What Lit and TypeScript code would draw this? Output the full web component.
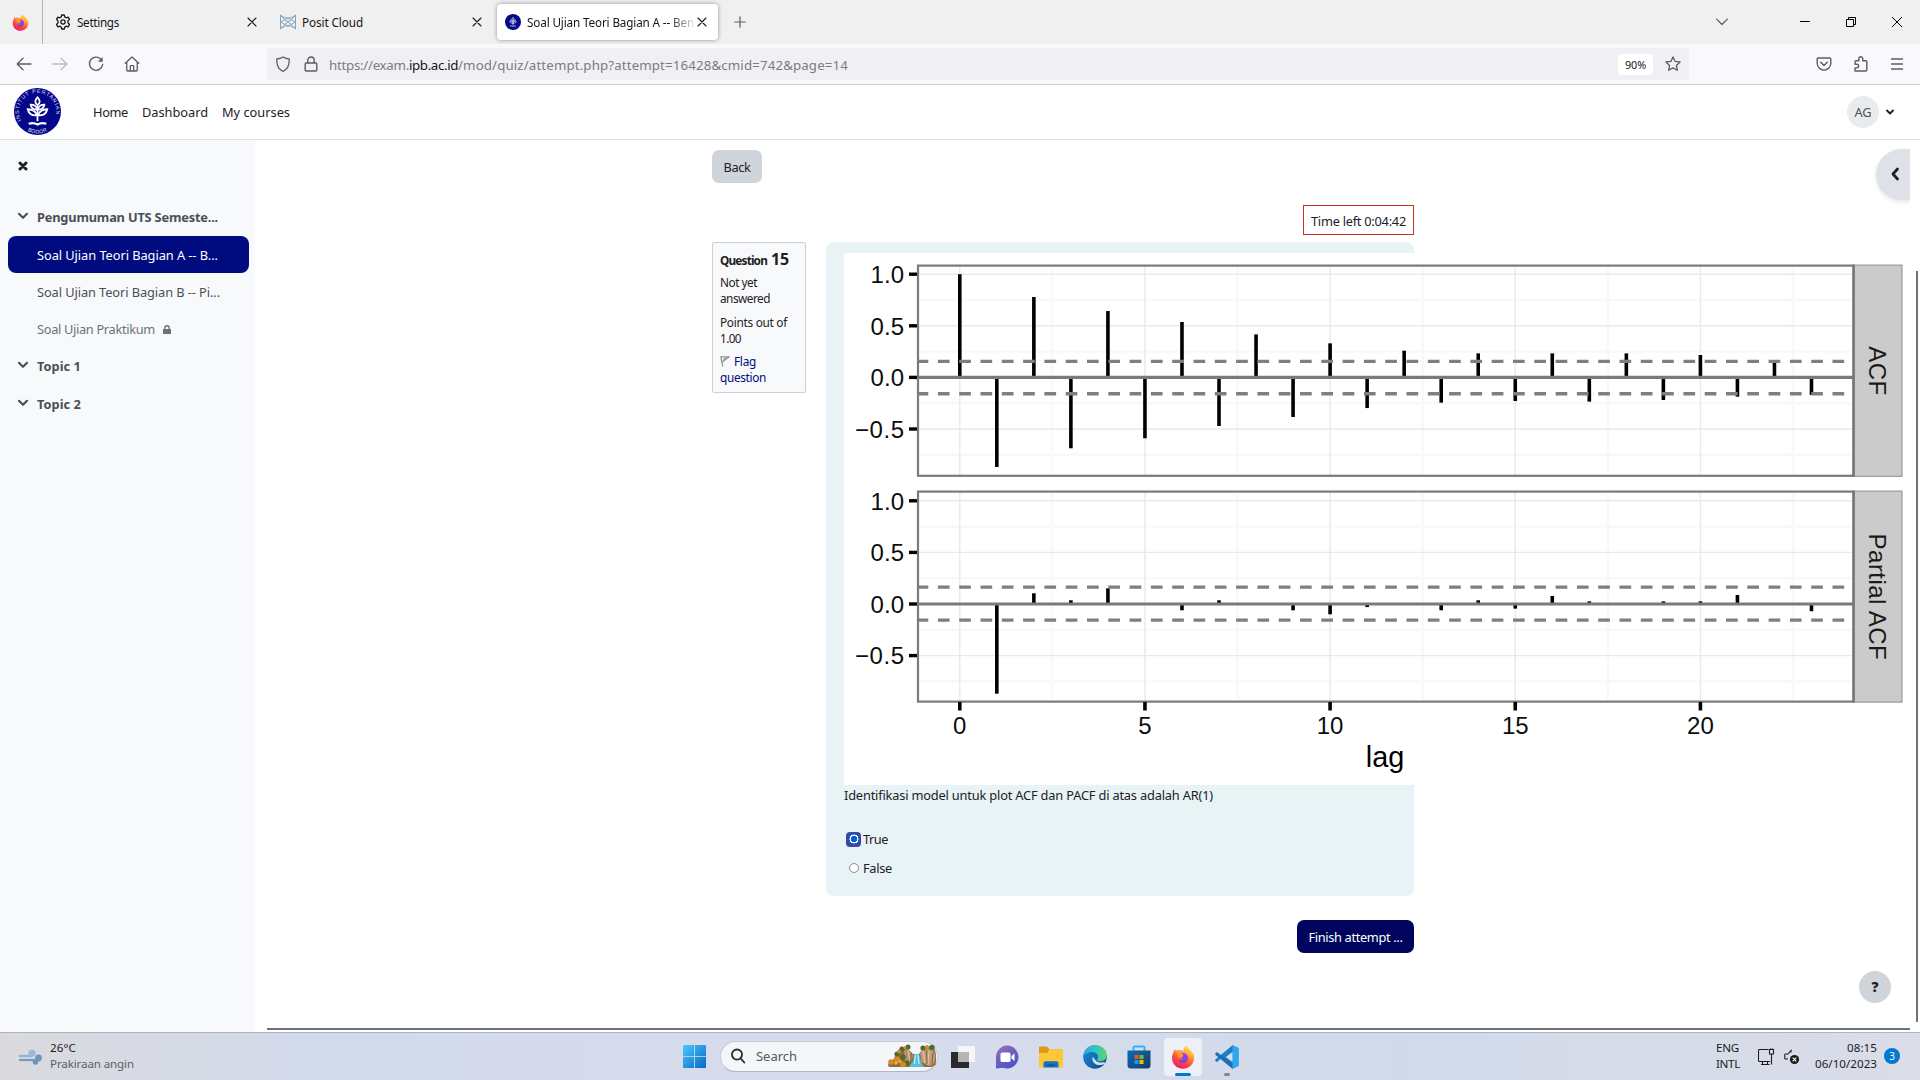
import { LitElement, html, svg, css } from "lit";
import { customElement, property } from "lit/decorators.js";

/** Text run whose tracking is adjusted so that it spans a known width. */
@customElement("fit-text")
class FitText extends LitElement {
  @property({ type: Number }) w = 0;
  @property() text = "";
  static styles = css`
    :host { display: inline-block; white-space: nowrap; }
    .run { display: inline-block; white-space: pre; }
  `;
  render() {
    return html`<span class="run">${this.text}</span>`;
  }
  updated() {
    const run = this.renderRoot.querySelector(".run") as HTMLElement;
    run.style.letterSpacing = "0px";
    const natural = run.getBoundingClientRect().width;
    if (this.w && natural) run.style.letterSpacing = `${(this.w - natural) / this.text.length}px`;
  }
}

const t = (text: string, w: number, cls = "") => html`<fit-text class=${cls} .text=${text} .w=${w}></fit-text>`;

const firefox = (s: number) => html`<svg width=${s} height=${s} viewBox="0 0 24 24">
  <defs>
    <linearGradient id="ff1" x1=".8" y1="0" x2=".3" y2="1"><stop offset="0" stop-color="#fff44f"/><stop offset=".35" stop-color="#ffa436"/><stop offset=".65" stop-color="#ff4f3a"/><stop offset="1" stop-color="#f5156c"/></linearGradient>
    <linearGradient id="ff2" x1=".7" y1="0" x2=".4" y2="1"><stop offset="0" stop-color="#b833e1"/><stop offset="1" stop-color="#5b4ee8"/></linearGradient>
  </defs>
  <path fill="url(#ff1)" d="M15 .3c1.300 2.500 3.600 3.800 5 5.400.7.700 1 1.600 1.200 2.300l.6-.6c1 2 1.500 4 1.300 6.100C22.600 19.500 18 23.700 12 23.700 5.800 23.700 1 19 1 13c0-2.600.7-4.600 1.700-6.200L3 4.300l2 1.500c1.300-.8 2.400-.7 3.400-.4 1.600-.2 3 .1 3.900.9C12.300 4 13.400 2 15 .3z"/>
  <path fill="url(#ff2)" d="M8.500 8.500c2.500-1.500 6.500-.5 8 2.200 1.200 2.600.2 5.800-2.700 7-2.800 1-6-.3-6.600-3 1.200.9 2.800.8 3.800.1l1.200-.9c-.1-.7-1.200-.6-1.500-1 .2-1 1.200-1.200 1.700-1.700-1.400-1.300-2.600-1.200-3.900-2.700z"/>
  <path fill="#ff9a2e" d="M5 5.800c1.300-.8 3-.7 4 0 1.600 0 2.700.5 3.300 1-.9.100-1.500.5-1.900 1.100 1 .9 2.200 1.500 2 2.200-.4.900-1.700.8-1.900 1.900-.9-.1-2.200-.3-3.200.8C6 11 6.300 9.300 7 8.300 6 7.800 5.300 6.800 5 5.800z"/>
</svg>`;

const crest = (s: number, detail: boolean) => html`<svg width=${s} height=${s} viewBox="0 0 48 48">
  <defs>
    <path id="arcTop" d="M8.200 34.500A19 19 0 1 1 39.800 34.500"/>
    <path id="arcBot" d="M8.500 40A22 22 0 0 0 39.500 40"/>
  </defs>
  <circle cx="24" cy="24" r="24" fill="#06068a"/>
  ${detail
    ? svg`<g fill="#dfe0f5" font-family="Liberation Sans, sans-serif" font-size="5.400">
        <text textLength="72"><textPath href="#arcTop" startOffset="1.500">INSTITUT PERTANIAN</textPath></text>
        <text textLength="21"><textPath href="#arcBot" startOffset="6.500">BOGOR</textPath></text></g>`
    : ""}
  <g fill="none" stroke="#fff" stroke-width="1.800">
    <path d="M24 17v17M24 9.500c-3 3.200-3 5.400 0 8 3-2.600 3-4.800 0-8z"/>
    <path d="M23.500 22c-3.700.2-6-1.500-6.500-5 3.700 0 6 1.700 6.500 5zM24.500 22c3.700.2 6-1.500 6.500-5-3.700 0-6 1.700-6.500 5z"/>
    <path d="M23.500 28c-5 .3-8.500-1.900-9.500-6.300 5 .2 8.500 2.300 9.500 6.300zM24.500 28c5 .3 8.500-1.900 9.500-6.300-5 .2-8.500 2.300-9.500 6.300z"/>
    <path d="M15 36.500c3.500-1.200 6-1 9 .8 3-1.800 5.500-2 9-.8" stroke-width="2.200"/>
  </g>
</svg>`;

const stroke = (w: number, h: number, d: string, c = "#5b5b66", sw = 1.3, cls = "") =>
  html`<svg class=${cls} width=${w} height=${h} viewBox="0 0 ${w} ${h}" fill="none" stroke=${c} stroke-width=${sw} stroke-linecap="round" stroke-linejoin="round"><path d=${d}/></svg>`;

const xIcon = (c = "#1b1b1f") => stroke(10, 10, "M1 1l8 8M9 1l-8 8", c, 1.1);
const chevron = (c: string) => stroke(12, 8, "M2 1.800l4 4 4-4", c, 2.200);

const ACF = [1, -0.868, 0.779, -0.687, 0.643, -0.59, 0.537, -0.471, 0.417, -0.384, 0.33, -0.297, 0.259, -0.245, 0.233, -0.229, 0.233, -0.235, 0.233, -0.219, 0.217, -0.187, 0.146, -0.17];
const PACF = [0, -0.869, 0.104, 0.036, 0.152, 0, -0.061, 0.036, 0, -0.061, -0.1, -0.03, 0, -0.061, 0.036, -0.045, 0.078, 0.026, 0, 0.026, 0.026, 0.087, 0, -0.07];

@customElement("acf-plot")
class AcfPlot extends LitElement {
  static styles = css`
    :host { display: block; width: 1066px; height: 532px; background: #fff; }
    svg { display: block; }
    text { font-family: "Liberation Sans", Arial, sans-serif; font-size: 24px; fill: #0d0d0d; }
    .title { font-size: 28.800px; fill: #000; }
    .strip { fill: #1a1a1a; }
  `;
  private x(lag: number) { return 115.8 + lag * 37.03; }

  private panel(values: number[], zero: number, top: number, bottom: number, upper: number, lower: number, label: string, span: number) {
    const y = (v: number) => zero - v * 103.2;
    return svg`
      ${[-0.75, -0.25, 0.25, 0.75].map((v) => svg`<path d="M76 ${y(v)}H1008" stroke="#f8f8f8" stroke-width="2.500"/>`)}
      ${[2.5, 7.5, 12.5, 17.5, 22.5].map((v) => svg`<path d="M${this.x(v)} ${top + 2}V${bottom - 2}" stroke="#f8f8f8" stroke-width="2.500"/>`)}
      ${[-0.5, 0.5, 1].map((v) => svg`<path d="M75 ${y(v)}H1009" stroke="#e9e9e9" stroke-width="1.400"/>`)}
      ${[0, 5, 10, 15, 20].map((v) => svg`<path d="M${this.x(v)} ${top}V${bottom}" stroke="#e9e9e9" stroke-width="1.400"/>`)}
      ${values.map((v, i) => (v ? svg`<path d="M${this.x(i)} ${zero}V${y(v)}" stroke="#000" stroke-width="3.600"/>` : ""))}
      <path d="M74 ${zero}H1009" stroke="#7a7a7a" stroke-width="3.200"/>
      ${[upper, lower].map((v) => svg`<path d="M74 ${v}H1004" stroke="#7f7f7f" stroke-width="3.400" stroke-dasharray="11.700 9.600" stroke-dashoffset="1.400"/>`)}
      <rect x="74" y=${top} width="935.500" height=${bottom - top} fill="none" stroke="#7a7a7a" stroke-width="2.200"/>
      <rect x="1010.500" y=${top - 0.5} width="47.500" height=${bottom - top + 1} fill="#cbcbcb" stroke="#8a8a8a" stroke-width="1"/>
      <path d="M1009.500 ${top - 1}V${bottom + 1}" stroke="#777" stroke-width="2.200"/>
      <text class="strip" transform="translate(1024.800 ${(top + bottom) / 2}) rotate(90)" text-anchor="middle" textLength=${span}>${label}</text>
      ${[1, 0.5, 0, -0.5].map((v) => svg`
        <path d="M65 ${y(v)}H73" stroke="#000" stroke-width="3.400"/>
        <text x="60" y=${y(v) + 8.8} text-anchor="end" textLength=${v < 0 ? 49 : 33.4}>${v.toFixed(1).replace("-", "\u2212")}</text>`)}
    `;
  }

  render() {
    return html`<svg width="1066" height="532" viewBox="0 0 1066 532">
      ${this.panel(ACF, 124.4, 12.6, 222.8, 108.4, 140.7, "ACF", 49)}
      ${this.panel(PACF, 351, 238.6, 448.6, 334.1, 367.1, "Partial ACF", 126)}
      ${[0, 5, 10, 15, 20].map((v) => svg`
        <path d="M${this.x(v)} 449V457.500" stroke="#000" stroke-width="3.600"/>
        <text x=${this.x(v)} y="480.700" text-anchor="middle">${v}</text>`)}
      <text class="title" x="541" y="513.700" text-anchor="middle">lag</text>
    </svg>`;
  }
}

@customElement("app-root")
class AppRoot extends LitElement {
  static styles = css`
    :host { display: flex; flex-direction: column; width: 1920px; height: 1080px; overflow: hidden; position: relative; background: #fff;
      font-family: "Noto Sans", "Open Sans", sans-serif; font-size: 12.800px; line-height: 16px; color: #1d2125; }
    * { box-sizing: border-box; }
    svg { display: block; flex: none; }
    fit-text { flex: none; }

    .tabs { height: 44px; flex: none; display: flex; align-items: center; background: #f0f0f0; font-size: 11.700px; color: #15141a; }
    .pin { width: 43px; height: 44px; border-right: 1px solid #b5b5b5; padding: 14px 0 0 12px; margin-right: 1px; }
    .tab { width: 225px; height: 36px; padding: 0 12px 0 11px; display: flex; align-items: center; gap: 6px; }
    .tab .label { flex: 1; overflow: hidden; display: flex; }
    .tab.active { position: relative; z-index: 0; }
    .tab.active::before { content: ""; position: absolute; z-index: -1; inset: 0 1px 0 3px; background: #fff; border-radius: 4px; box-shadow: 0 0 4px rgba(0,0,0,.4); }
    .tab.active .label { margin-right: -3px; -webkit-mask-image: linear-gradient(90deg, #000 142px, transparent 170px); mask-image: linear-gradient(90deg, #000 142px, transparent 170px); }
    .plus { margin-left: 15px; }
    .winctl { margin-left: auto; display: flex; align-items: center; padding-right: 18px; }
    .winctl .c1 { margin-right: 72px; } .winctl .c2 { margin-right: 36px; } .winctl .c3 { margin-right: 36px; }

    .toolbar { height: 41px; flex: none; display: flex; align-items: center; background: #f9f9fb; border-bottom: 1px solid #cccccf; padding-left: 16px; }
    .toolbar .nav { display: flex; gap: 20px; width: 251px; }
    .dim { opacity: .4; }
    .url { width: 1422px; height: 32px; background: #f0f0f4; border-radius: 4px; display: flex; align-items: center; padding-left: 8px; font-size: 13.300px; color: #7b7b83; }
    .url > fit-text, .url > b { padding-top: 1px; }
    .url .lock { margin: 0 10px 0 12px; }
    .url b { font-weight: 400; color: #15141a; }
    .zoom { margin-left: auto; width: 35px; height: 21px; border-radius: 4px; background: #fff; font-size: 10.800px; color: #15141a; display: flex; align-items: center; justify-content: center; padding-top: 1px; }
    .star { margin: 0 8px 0 12px; }
    .right { margin-left: auto; display: flex; align-items: center; gap: 22px; padding-right: 17px; }
    .right svg:first-child { margin-right: -1px; }

    .navbar { height: 55px; flex: none; display: flex; align-items: center; border-bottom: 1px solid #dee2e6; padding-left: 14px; }
    .navbar > svg { margin-top: -1px; }
    .navbar .links { display: flex; gap: 14px; margin-left: 32px; }
    .user { margin-left: auto; display: flex; align-items: center; gap: 5px; padding-right: 24px; }
    .avatar { width: 32px; height: 32px; border-radius: 50%; background: #e9ecef; color: #495057; display: flex; align-items: center; justify-content: center; }

    .body { height: 892px; flex: none; display: flex; }
    .side { width: 255px; background: #f8f9fb; color: #495057; padding: 21px 6px 0 8px; }
    .side .close { height: 38px; padding: 0 0 0 10px; }
    .row { height: 37.400px; border-radius: 8px; display: flex; align-items: center; padding-left: 9px; gap: 8px; }
    .row.head { padding-bottom: 1px; }
    .row.sub { padding-left: 29px; }
    .row.active { background: #000b80; color: #fff; height: 37px; width: 241px; }
    .row.muted { color: #6a737b; }
    .bold { font-weight: 700; }
    .row .chev { margin-top: -3px; }

    .content { width: 702px; margin-left: 457px; padding-top: 10px; }
    .back { width: 50px; height: 33px; border-radius: 7px; background: #ced4da; display: flex; align-items: center; justify-content: center; }
    .timer { width: 111px; height: 30px; border: 1px solid #ca3120; margin: 22px 0 7px auto; display: flex; align-items: center; justify-content: center; padding-top: 2px; }
    .question { display: flex; justify-content: space-between; }
    .info { width: 94px; height: 151px; border: 1px solid #cad0d7; border-radius: 2px; background: #f8f9fa; padding: 8px 7px; font-size: 11.800px; }
    .info div { margin-bottom: 8px; display: flex; flex-direction: column; }
    .info .no { flex-direction: row; align-items: baseline; gap: 4px; margin-bottom: 6px; height: 17px; font-weight: 700; }
    .info .big { font-size: 16px; }
    .info .flag { color: #000b80; margin-top: -1px; }
    .info .fl { display: flex; align-items: center; gap: 4px; }
    .form { width: 588px; height: 654px; background: #e7f3f5; border-radius: 8px; padding: 11px 0 0 18px; }
    .qtext { margin: 2px 0 28px; }
    .opt { display: flex; align-items: center; gap: 2px; height: 16px; margin-bottom: 13px; padding-left: 2px; }
    .radio { width: 15px; height: 15px; display: flex; align-items: center; justify-content: center; border-radius: 4px; }
    .radio i { width: 10px; height: 10px; border-radius: 50%; border: 1px solid #8f8f9d; background: #fff; }
    .radio.on { background: #3a48a0; }
    .radio.on i { border: none; background: radial-gradient(circle, #0060df 0 3px, #fff 3.400px 4.300px, #0060df 4.700px); }
    .finish { width: 117px; height: 33px; border-radius: 7px; background: #00045c; color: #fff; margin: 24px 0 0 auto; display: flex; align-items: center; justify-content: center; padding-top: 1px; }

    .drawer { position: absolute; left: 1876px; top: 149px; width: 34px; height: 51px; border-radius: 26px 0 0 26px; background: #dee2e6; box-shadow: 0 2px 4px rgba(0,0,0,.1); padding: 18px 0 0 14px; clip-path: inset(-8px 0 -8px -8px); }
    .help { position: absolute; left: 1859px; top: 971px; width: 32px; height: 32px; border-radius: 50%; background: #ced4da; font-weight: 900; font-size: 14px; display: flex; align-items: center; justify-content: center; }
    .vbar { position: absolute; left: 1916px; top: 271px; width: 2px; height: 751px; background: #6a737b; }
    .hbar { position: absolute; left: 267px; top: 1028px; width: 1643px; height: 2px; background: #6a737b; }

    .taskbar { position: relative; height: 48px; flex: none; border-top: 1px solid #adb2bf; display: flex; align-items: center; font-size: 11.600px; color: #1b1b1b;
      background: linear-gradient(90deg, #dadade 0, #d3daea 300px, #d6dcec 900px, #d2daea 1400px, #dadde8 1920px); }
    .weather { display: flex; align-items: center; gap: 8px; width: 683px; padding-left: 19px; }
    .weather .lines, .lang, .clock { display: flex; flex-direction: column; margin-top: -1px; }
    .soft { color: #5c5f66; }
    .search { width: 218px; height: 31px; border-radius: 16px; background: #f4f6fa; border: 1px solid #c4cad6; border-bottom-color: #b0b7c3; margin: -1px 13px 0 14px; display: flex; align-items: center; padding: 0 1px 0 9px; font-size: 13px; color: #55585d; }
    .search .word { margin: 0 auto 0 10px; }
    .apps { display: flex; align-items: center; gap: 20px; }
    .ff { width: 38px; height: 38px; border-radius: 4px; background: #edf0f7; margin: 0 -7px; position: relative; display: flex; align-items: center; justify-content: center; }
    .ff::after { content: ""; position: absolute; bottom: 0; left: 11px; width: 16px; height: 3px; border-radius: 2px; background: #0078d4; }
    .code { position: relative; }
    .code::after { content: ""; position: absolute; bottom: -7px; left: 9px; width: 6px; height: 3px; border-radius: 2px; background: #85898f; }
    .tray { margin-left: auto; display: flex; align-items: center; padding-right: 20px; }
    .lang { margin-right: 18px; }
    .sound { margin-left: 9px; }
    .tray .clock { align-items: flex-end; margin: -1px 7px 0 15px; }
    .badge { width: 16px; height: 16px; border-radius: 50%; background: #0078d4; color: #fff; font-size: 10px; display: flex; align-items: center; justify-content: center; margin-top: -1px; }
  `;

  private tabBar() {
    return html`<div class="tabs">
      <div class="pin">${firefox(17)}</div>
      <div class="tab">
        <svg width="16" height="16" viewBox="0 0 16 16" fill="none" stroke="#15141a" stroke-width="1.300" stroke-linejoin="round"><path d="M6.700 1h2.600l.5 2 1.300.8 2-.7 1.400 2.300-1.500 1.500v2l1.500 1.600-1.400 2.300-2-.6-1.300.8-.5 2H6.700l-.5-2-1.300-.8-2 .6-1.400-2.300L3 8.900v-2L1.500 5.400l1.400-2.300 2 .7L6.200 3z"/><circle cx="8" cy="8" r="2.100"/></svg>
        <span class="label">${t("Settings", 42)}</span>${xIcon()}</div>
      <div class="tab">
        <svg width="16" height="16" viewBox="0 0 16 16" fill="none" stroke="#7c9dbd" stroke-width=".9"><path d="M.5 1v14M15.500 1v14M.5 1c3 4 12 4 15 0M.5 15c3-4 12-4 15 0M.5 1c4 6 11 8 15 14M15.500 1c-4 6-11 8-15 14M.5 8l7.500-4 7.500 4-7.500 4z"/></svg>
        <span class="label">${t("Posit Cloud", 61)}</span>${xIcon()}</div>
      <div class="tab active">${crest(16, false)}
        <span class="label">${t("Soal Ujian Teori Bagian A -- Ben", 167)}</span>${xIcon()}</div>
      <div class="plus">${stroke(12, 12, "M6 .8v10.400M.8 6h10.400", "#5b5b66", 1.2)}</div>
      <div class="winctl">
        ${stroke(12, 8, "M.7 1.200L6 6.500l5.300-5.300", "#5b5b66", 1.2, "c1")}
        ${stroke(10, 10, "M.5 4.500h9", "#000", 1, "c2")}
        <svg class="c3" width="10" height="10" viewBox="0 0 10 10" fill="none" stroke="#000"><path d="M.5 2.500h7v7h-7zM2.500 2.500v-2h7v7h-2"/></svg>
        ${stroke(10, 10, "M.3.3l9.400 9.400M9.700.3L.3 9.700", "#000", 1)}
      </div>
    </div>`;
  }

  private toolbar() {
    return html`<div class="toolbar">
      <div class="nav">
        ${stroke(16, 16, "M15 8H1.500M7 2.200L1.200 8 7 13.800")}
        ${stroke(16, 16, "M1 8h13.500M9 2.200L14.800 8 9 13.800", "#5b5b66", 1.3, "dim")}
        <svg width="16" height="16" viewBox="0 0 16 16" fill="none" stroke="#5b5b66" stroke-width="1.400" stroke-linecap="round"><path d="M13.700 4.300A6.600 6.600 0 1 0 14.600 8.500"/><path d="M14.600 1v4.700H9.900z" fill="#5b5b66" stroke="none"/></svg>
        ${stroke(16, 16, "M1.200 7.300L8 1l6.800 6.300M2.800 6.500v7.700q0 .8.8.8h8.800q.8 0 .8-.8V6.500M6.300 15v-4.500q0-.8.8-.8h1.800q.8 0 .8.8V15")}
      </div>
      <div class="url">
        ${stroke(16, 16, "M8 1c2 1.300 4 1.900 6.200 2 .3 5.700-1.400 10.200-6.200 12.300C3.200 13.200 1.500 8.700 1.800 3 4 2.900 6 2.300 8 1z")}
        ${stroke(16, 16, "M3.200 7h9.600q1 0 1 1v6q0 1-1 1H3.200q-1 0-1-1V8q0-1 1-1zM4.800 7V4.200a3.200 3.200 0 0 1 6.400 0V7", "#5b5b66", 1.4, "lock")}
        ${t("https://exam.", 80)}<b>${t("ipb.ac.id", 49)}</b>${t("/mod/quiz/attempt.php?attempt=16428&cmid=742&page=14", 390)}
        <div class="zoom">${t("90%", 21)}</div>
        ${stroke(16, 16, "M8 .9l2.100 4.500 5 .6-3.700 3.400 1 4.900L8 11.900l-4.400 2.400 1-4.900L.9 6l5-.6z", "#5b5b66", 1.3, "star")}
      </div>
      <div class="right">
        ${stroke(16, 16, "M2.200 2h11.600q1 0 1 1v4.300a6.800 6.800 0 0 1-13.600 0V3q0-1 1-1zM4.700 6.300L8 9.500l3.300-3.200", "#5b5b66", 1.4)}
        ${stroke(16, 16, "M2 15h10.800q1 0 1-1V5.600q0-.9-.9-.9H9.700V2.600a1.900 1.900 0 0 0-3.800 0v2.100H3q-.9 0-.9.9v2.700h1.700a1.800 1.800 0 0 1 0 3.600H2z", "#5b5b66", 1.4)}
        ${stroke(12, 12, "M.5 1h11M.5 6h11M.5 11h11")}
      </div>
    </div>`;
  }

  private sidebar() {
    const chev = html`<span class="chev">${chevron("#495057")}</span>`;
    return html`<div class="side">
      <div class="close">${stroke(10, 10, "M2 2l6 6M8 2L2 8", "#1d2125", 3)}</div>
      <div class="row head bold">${chev}${t("Pengumuman UTS Semeste...", 181)}</div>
      <div class="row sub active">${t("Soal Ujian Teori Bagian A -- B...", 181)}</div>
      <div class="row sub">${t("Soal Ujian Teori Bagian B -- Pi...", 183)}</div>
      <div class="row sub muted">${t("Soal Ujian Praktikum", 118)}
        <svg width="8" height="9" viewBox="0 0 8 9"><path d="M0 4h8v5H0z" fill="#6a737b"/><path d="M1.800 4.500V3a2.200 2.200 0 0 1 4.400 0v1.500" fill="none" stroke="#6a737b" stroke-width="1.400"/></svg></div>
      <div class="row head bold">${chev}${t("Topic 1", 44)}</div>
      <div class="row bold">${chev}${t("Topic 2", 44)}</div>
    </div>`;
  }

  private quiz() {
    return html`<div class="content">
      <div class="back">${t("Back", 27)}</div>
      <div class="timer">${t("Time left 0:04:42", 95)}</div>
      <div class="question">
        <div class="info">
          <div class="no">${t("Question", 47)}${t("15", 18, "big")}</div>
          <div>${t("Not yet", 37)}${t("answered", 50)}</div>
          <div>${t("Points out of", 67)}${t("1.00", 21)}</div>
          <div class="flag"><span class="fl">${stroke(10, 11, "M.8.8l1.900 9.400M.8.8h8.500L2.200 6M3.400 3l2.500-.4", "#8f8f8f", 1.2)}${t("Flag", 22)}</span>${t("question", 46)}</div>
        </div>
        <div class="form">
          <acf-plot></acf-plot>
          <div class="qtext">${t("Identifikasi model untuk plot ACF dan PACF di atas adalah AR(1)", 369)}</div>
          <div class="opt"><span class="radio on"><i></i></span>${t("True", 25)}</div>
          <div class="opt"><span class="radio"><i></i></span>${t("False", 29)}</div>
        </div>
      </div>
      <div class="finish">${t("Finish attempt ...", 94)}</div>
    </div>`;
  }

  private taskbar() {
    return html`<div class="taskbar">
      <div class="weather">
        <svg width="23" height="16" viewBox="0 0 23 16" fill="none" stroke-width="2.200"><path d="M0 7h12.500" stroke="#8fb4d8"/><circle cx="13" cy="4.200" r="3.600" fill="#9bb9dd"/><path d="M0 11h17" stroke="#6f9cc4"/><circle cx="19.500" cy="9" r="3.400" fill="#6d96bf"/><circle cx="16.500" cy="13" r="2.800" fill="#6d96bf"/></svg>
        <div class="lines">${t("26°C", 26)}${t("Prakiraan angin", 84, "soft")}</div>
      </div>
      <svg width="23" height="23" viewBox="0 0 23 23"><defs><linearGradient id="w" x1="0" y1="0" x2="1" y2="1"><stop offset="0" stop-color="#4cc8fb"/><stop offset="1" stop-color="#0568c8"/></linearGradient></defs><path fill="url(#w)" d="M1 0h10.200v11.200H0V1q0-1 1-1zM12 0h10q1 0 1 1v10.200H12zM0 12h11.200v11H1q-1 0-1-1zM12 12h11v10q0 1-1 1H12z"/></svg>
      <div class="search">
        ${stroke(16, 16, "M7 1.500a5 5 0 1 1 0 10.100 5 5 0 0 1 0-10.100zM10.600 10.300L14.300 14.500", "#2b2b2b", 1.8)}
        <span class="word">${t("Search", 41)}</span>
        <svg width="49" height="24" viewBox="0 0 49 24">
          <path d="M1 22q0-4 5-6l5-9 5-4 5 2 5 5h6l5-6 6-2 5 4 1.500 8-1 7-4 2H3z" fill="#8c6d3c"/>
          <path d="M17 6l4-1 5 5-1 6-4 3-4-4z" fill="#b58d66"/>
          <path d="M33 8l4-4 9 2 2.500 6-1 7-5 3-8-4z" fill="#c09878"/>
          <path d="M21 6l2 11M36 6l2 13M42 7l-1 14" stroke="#ddbd9b" stroke-width="1.500"/>
          <path d="M39.500 6l.5 14M46 9l-1 11M24.500 9l-1 8" stroke="#87654a" stroke-width="1"/>
          <path d="M27 10h5l2 8 3 5H22l4-6z" fill="#56bfdc"/><path d="M28.500 11l-1 9M31 11l1 9" stroke="#c6f0f7" stroke-width="1.200"/>
          <g fill="#4a6b2a"><circle cx="15" cy="5" r="2.600"/><circle cx="21" cy="3" r="2.500"/><circle cx="36" cy="4" r="2.600"/><circle cx="45" cy="3.500" r="2.700"/><circle cx="10" cy="10" r="2.600"/><circle cx="16" cy="13" r="2.600"/><circle cx="20" cy="19" r="2.500"/></g>
          <g fill="#db8a22"><circle cx="12" cy="7.500" r="1.900"/><circle cx="18" cy="3.500" r="1.500"/><circle cx="40" cy="3" r="2"/><circle cx="4" cy="18" r="2.800"/><circle cx="10" cy="15.500" r="3"/><circle cx="16" cy="20.500" r="2.800"/></g>
          <g fill="#f0b43c"><circle cx="9" cy="19" r="1.800"/><circle cx="13" cy="17.500" r="1.500"/></g></svg>
      </div>
      <div class="apps">
        <svg width="24" height="24" viewBox="0 0 24 24"><path d="M0 7h18v16H0z" fill="#2a2a2a"/><path d="M7 1h17v16H7z" fill="#f6f6f6"/><path d="M7 7h11v10H7z" fill="#b5b5b5"/></svg>
        <svg width="24" height="24" viewBox="0 0 24 24"><defs><linearGradient id="ch" x1="0" y1="0" x2=".6" y2="1"><stop offset="0" stop-color="#9a6fb5"/><stop offset="1" stop-color="#4b53c9"/></linearGradient></defs><path fill="url(#ch)" d="M12 .5A11.500 11.500 0 1 1 8 22.800L1 23.500v-11A11.400 11.400 0 0 1 12 .5z"/><rect x="5.500" y="7.500" width="10" height="9.500" rx="1.500" fill="#fff"/><path d="M16.500 11l3-2.500v7.500l-3-2.500z" fill="#fff"/></svg>
        <svg width="24" height="24" viewBox="0 0 24 24"><path d="M0 2.500Q0 1.500 1 1.500h7l2.500 3H23q1 0 1 1V9H0z" fill="#dd9a12"/><path d="M0 8h8l2.500-3.500H23q1 0 1 1V21q0 1.500-1.500 1.500h-21Q0 22.500 0 21z" fill="#fdc835"/><path d="M4.500 22.500V18q0-1.800 1.800-1.800h11.400q1.800 0 1.800 1.800v4.500z" fill="#1272c4"/><path d="M8 19.500h8v1.600H8z" fill="#0b4f94"/></svg>
        <svg width="24" height="24" viewBox="0 0 24 24"><defs><linearGradient id="e1"><stop offset="0" stop-color="#2aa5e6"/><stop offset=".5" stop-color="#2cc6c9"/><stop offset="1" stop-color="#63d759"/></linearGradient><linearGradient id="e2" x1="0" y1="0" x2="1" y2="1"><stop offset="0" stop-color="#1b8fdb"/><stop offset="1" stop-color="#0c4a8c"/></linearGradient></defs><circle cx="12" cy="12" r="11.800" fill="url(#e2)"/><path d="M.3 11C1 4.500 6 .2 12 .2c7 0 11.800 4.800 11.800 10 0 3.800-3 6-6 6-2.500 0-4-1-3.800-1.800.8-.8 1-1.600 1-2.500C15 9 12 7 8.700 7 4.500 7 1.500 9.500.3 11z" fill="url(#e1)"/><path d="M10 11.500c-2 4 1.500 9.500 8 8.500 2-.3 3.500-1.300 4.500-1.500-1-1-1-1.500-1.500-1.500-3.500 1.500-8.500.5-11-5.500z" fill="#d5dcea"/></svg>
        <svg width="24" height="24" viewBox="0 0 24 24"><defs><linearGradient id="st" x1="0" y1="0" x2="1" y2="1"><stop offset="0" stop-color="#0b6cb8"/><stop offset="1" stop-color="#173b66"/></linearGradient></defs><path d="M6.500 6V3q0-1.500 1.500-1.500h8q1.500 0 1.500 1.500v3" fill="none" stroke="#2fb5f2" stroke-width="2"/><path d="M.5 5.500h23V20q0 3.500-3 3.500h-17q-3 0-3-3.500z" fill="url(#st)"/><path d="M7.500 10h4v4h-4z" fill="#f25022"/><path d="M12.500 10h4v4h-4z" fill="#7fba00"/><path d="M7.500 15h4v4h-4z" fill="#00a4ef"/><path d="M12.500 15h4v4h-4z" fill="#ffb900"/></svg>
        <div class="ff">${firefox(24)}</div>
        <div class="code"><svg width="24" height="24" viewBox="0 0 24 24"><path d="M17.500.3l6 2.700v18l-6 2.700L6 13.500 2 17 .3 16.200V14.500L17.500.3z" fill="#1c7fc7"/><path d="M.3 8.500L2 7l4 3.200 11.500 8.300v5.200L.3 9.800z" fill="#1b6fb5"/><path d="M17.500.3l6 2.700v18l-6 2.700z" fill="#2fa7ef"/><path d="M17.500 7v10L10.800 12z" fill="#d6dcec"/></svg></div>
      </div>
      <div class="tray">
        <div class="lang">${t("ENG", 23)}${t("INTL", 24)}</div>
        <svg width="17" height="18" viewBox="0 0 17 18" fill="none" stroke="#1b1b1b" stroke-width="1.100"><path d="M10.500 1.500H1.500q-1 0-1 1v10q0 1 1 1H12M4.500 13.500v3M9.500 13.500v3M3 16.500h8.500M11.500 1.500h4v4.500h-4zM12.500 1.500v-1M14.500 1.500v-1M13.500 6v10.500"/></svg>
        <svg class="sound" width="16" height="16" viewBox="0 0 16 16" fill="none" stroke="#1b1b1b" stroke-width="1.100"><path d="M7 3.500V1.500L4 5H1.500q-.7 0-.7.700v3.600q0 .7.700.7H4"/><circle cx="10.500" cy="10.500" r="4.600" fill="#1b1b1b" stroke="none"/><path d="M8.700 8.700l3.600 3.600M12.300 8.700l-3.600 3.600" stroke="#fff"/></svg>
        <div class="clock">${t("08:15", 30)}${t("06/10/2023", 62)}</div>
        <div class="badge">3</div>
      </div>
    </div>`;
  }

  render() {
    return html`
      ${this.tabBar()}${this.toolbar()}
      <div class="navbar">${crest(47, true)}
        <div class="links">${t("Home", 35)}${t("Dashboard", 66)}${t("My courses", 68)}</div>
        <div class="user"><span class="avatar">${t("AG", 17)}</span>${stroke(12, 8, "M3 2.500l3 3 3-3", "#1d2125", 1.9)}</div>
      </div>
      <div class="body">${this.sidebar()}${this.quiz()}</div>
      ${this.taskbar()}
      <div class="drawer">${stroke(10, 14, "M7.500 2L3 7l4.500 5", "#1d2125", 2.8)}</div>
      <div class="help">?</div>
      <div class="vbar"></div><div class="hbar"></div>`;
  }
}
